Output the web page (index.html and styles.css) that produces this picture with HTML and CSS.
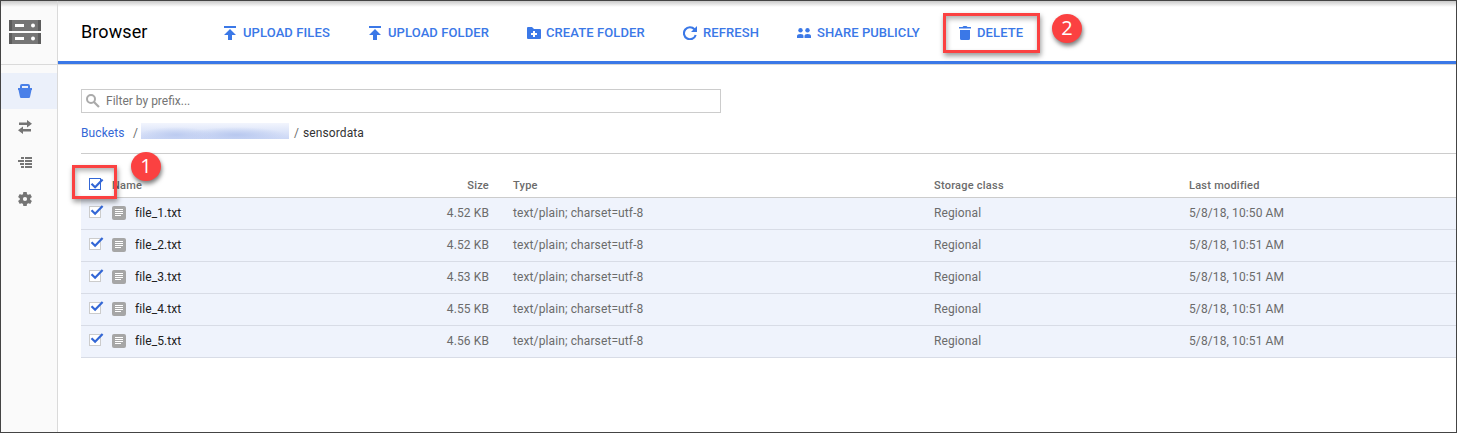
FILE: index.html
```html
<!DOCTYPE html>
<html lang="en">
<head>
<meta charset="utf-8">
<title>Browser</title>
<link rel="stylesheet" href="styles.css">
</head>
<body>
<svg class="defs" width="0" height="0">
  <defs>
    <symbol id="upload" viewBox="0 0 12 14"><path d="M0 0h12v2H0zM6 3l6 6H8v5H4V9H0z"/></symbol>
    <symbol id="check" viewBox="0 0 16 14"><rect class="check-box" x="0.5" y="2.5" width="11" height="11"/><path class="check-mark" d="M2.500 6.200l3.600 3.600L13.600 2"/></symbol>
    <symbol id="doc" viewBox="0 0 14 14"><rect width="14" height="14" rx="2" fill="#a6a6a6"/><path d="M3 3.500h8M3 5.500h8M3 7.500h8M3 9.500h6" stroke="#fff" fill="none"/></symbol>
  </defs>
</svg>
<div class="app">
  <nav class="sidebar">
    <div class="logo">
      <svg width="32" height="25" viewBox="0 0 32 25"><path fill="#757575" d="M0 0h32v11H0zM0 13h32v11H0z"/><path fill="#5c5c5c" d="M0 0h3v11H0zM29 0h3v11h-3zM0 13h3v11H0zM29 13h3v11h-3z"/><path fill="#fff" d="M6 4h9v3H6zM6 17h9v3H6z"/><circle cx="24" cy="5.500" r="2" fill="#fff"/><circle cx="24" cy="18.500" r="2" fill="#fff"/></svg>
    </div>
    <div class="nav-item selected"><svg width="14" height="14" viewBox="0 0 14 14"><path fill="#4a80e8" fill-rule="evenodd" d="M2 4V2q0-2 2-2h6q2 0 2 2v2h2v2h-.5L12 13q-.2 1-1 1H3q-.8 0-1-1L.5 6H0V4zm2 0h6V2H4z"/></svg></div>
    <div class="nav-item"><svg width="14" height="14" viewBox="0 0 14 14"><path d="M1 2.500h8V0l5 3.800-5 3.700V5H1zM13 9H5V6.500L0 10.200 5 14v-2.500h8z"/></svg></div>
    <div class="nav-item"><svg width="14" height="14" viewBox="0 0 14 14"><path d="M3 1h3v2H3zM7 1h7v2H7zM0 4h6v2H0zM7 4h7v2H7zM2 7h4v2H2zM7 7h7v2H7zM3 10h3v2H3zM7 10h7v2H7z"/></svg></div>
    <div class="nav-item"><svg width="14" height="14" viewBox="2.300 2 19.400 20"><path d="M19.430 12.980c.04-.32.070-.64.070-.98s-.03-.66-.07-.98l2.110-1.650c.19-.15.240-.42.120-.64l-2-3.460c-.12-.22-.39-.3-.61-.22l-2.490 1c-.52-.4-1.080-.73-1.690-.98l-.38-2.650C14.460 2.180 14.250 2 14 2h-4c-.25 0-.46.180-.49.420l-.38 2.650c-.61.250-1.170.59-1.690.98l-2.490-1c-.23-.09-.49 0-.61.220l-2 3.460c-.13.220-.07.49.120.640l2.110 1.650c-.04.320-.07.650-.07.980s.03.660.07.980l-2.110 1.650c-.19.150-.24.420-.12.640l2 3.460c.12.220.39.300.61.220l2.490-1c.52.400 1.080.730 1.690.980l.38 2.650c.03.240.24.420.49.420h4c.25 0 .46-.18.490-.42l.38-2.650c.61-.25 1.170-.59 1.690-.98l2.490 1c.23.090.49 0 .61-.22l2-3.460c.12-.22.070-.49-.12-.64zM12 15a3 3 0 1 1 0-6 3 3 0 0 1 0 6z"/></svg></div>
  </nav>
  <main class="main">
    <header class="topbar">
      <h1 class="title">Browser</h1>
      <div class="action upload-files"><svg width="12" height="14"><use href="#upload"/></svg><span>UPLOAD FILES</span></div>
      <div class="action upload-folder"><svg width="12" height="14"><use href="#upload"/></svg><span>UPLOAD FOLDER</span></div>
      <div class="action create"><svg width="14" height="14" viewBox="0 0 14 14"><path fill-rule="evenodd" d="M1 1h4l2 2h6q1 0 1 1v8q0 1-1 1H1q-1 0-1-1V2q0-1 1-1zM6 5v2H4v2h2v2h2V9h2V7H8V5z"/></svg><span>CREATE FOLDER</span></div>
      <div class="action refresh"><svg width="14" height="14" viewBox="0 0 14 14"><path d="M11.500 3.300A6 6 0 1 0 12.700 9" fill="none" stroke="#3b78e7" stroke-width="2.100"/><path d="M14 0v6H8z"/></svg><span>REFRESH</span></div>
      <div class="action share"><svg width="14" height="14" viewBox="0 0 14 14"><circle cx="3.500" cy="4.200" r="2.200"/><circle cx="10.500" cy="4.200" r="2.200"/><path d="M0 12v-2q0-2 3.500-2 3 0 3 2v2zM7.500 12v-2q0-2 3-2Q14 8 14 10v2z"/></svg><span>SHARE PUBLICLY</span></div>
      <div class="action delete"><svg width="12" height="14" viewBox="0 0 12 14"><path d="M0 1h3.500l1-1h3l1 1H12v1.500H0zM1 4h10v8.500q0 1.500-1.500 1.500h-7Q1 14 1 12.500z"/></svg><span>DELETE</span></div>
    </header>
    <section class="content">
      <div class="filter"><svg width="14" height="14" viewBox="0 0 14 14"><circle cx="5" cy="5" r="4" fill="none" stroke="#aaa" stroke-width="2"/><path d="M8 8l5 5" stroke="#aaa" stroke-width="2.200"/></svg><span>Filter by prefix...</span></div>
      <div class="crumbs"><a class="crumb-link">Buckets</a><span class="slash">/</span><span class="redacted"></span><span class="slash-end">/</span><span class="crumb-current">sensordata</span></div>
      <div class="table">
        <div class="row head"><svg class="check head-check" width="16" height="14" viewBox="0 0 16 14"><rect class="check-box" x="0.500" y="1.500" width="11" height="11"/><path class="check-mark" d="M2.500 6.700l3.600 3.600L13.600 2.500"/></svg><span class="name-head">Name</span><span class="size">Size</span><span>Type</span><span>Storage class</span><span>Last modified</span></div>
        <div class="row"><svg class="check" width="16" height="14"><use href="#check"/></svg><svg class="doc" width="14" height="14"><use href="#doc"/></svg><span class="name">file_1.txt</span><span class="size">4.52 KB</span><span>text/plain; charset=utf-8</span><span>Regional</span><span>5/8/18, 10:50 AM</span></div>
        <div class="row"><svg class="check" width="16" height="14"><use href="#check"/></svg><svg class="doc" width="14" height="14"><use href="#doc"/></svg><span class="name">file_2.txt</span><span class="size">4.52 KB</span><span>text/plain; charset=utf-8</span><span>Regional</span><span>5/8/18, 10:51 AM</span></div>
        <div class="row"><svg class="check" width="16" height="14"><use href="#check"/></svg><svg class="doc" width="14" height="14"><use href="#doc"/></svg><span class="name">file_3.txt</span><span class="size">4.53 KB</span><span>text/plain; charset=utf-8</span><span>Regional</span><span>5/8/18, 10:51 AM</span></div>
        <div class="row"><svg class="check" width="16" height="14"><use href="#check"/></svg><svg class="doc" width="14" height="14"><use href="#doc"/></svg><span class="name">file_4.txt</span><span class="size">4.55 KB</span><span>text/plain; charset=utf-8</span><span>Regional</span><span>5/8/18, 10:51 AM</span></div>
        <div class="row"><svg class="check" width="16" height="14"><use href="#check"/></svg><svg class="doc" width="14" height="14"><use href="#doc"/></svg><span class="name">file_5.txt</span><span class="size">4.56 KB</span><span>text/plain; charset=utf-8</span><span>Regional</span><span>5/8/18, 10:51 AM</span></div>
      </div>
    </section>
  </main>
  <div class="callout callout-check"></div>
  <div class="callout callout-delete"></div>
  <div class="step step-one">1</div>
  <div class="step step-two">2</div>
</div>
</body>
</html>
```
FILE: styles.css
```css
* { box-sizing: border-box; }
body { margin: 0; font-family: Roboto, sans-serif; font-size: 12px; color: #6b6b6b; }
svg { display: block; flex: none; }
.defs { position: absolute; }
.app { position: relative; display: flex; width: 1457px; height: 433px; border: 1px solid #444; background: linear-gradient(#c9c9c9, rgba(255, 255, 255, 0) 6px) #fff; overflow: hidden; }

.sidebar { width: 57px; border-right: 1px solid #dadada; background: linear-gradient(#c9c9c9, rgba(250, 250, 250, 0) 6px) #fafafa; }
.logo { height: 64px; margin-bottom: 8px; padding: 19px 0 0 8px; border-bottom: 1px solid #dadada; }
.nav-item { display: flex; align-items: center; height: 36px; padding-left: 17px; fill: #757575; }
.nav-item.selected { background: #ebf0fa; }

.main { flex: 1; min-width: 0; }
.topbar { display: flex; align-items: center; height: 64px; padding-left: 23px; border-bottom: 1px solid #d5d5d5; box-shadow: inset 0 -3px #3b78e7; }
.title { width: 143px; margin: 0; padding-bottom: 2px; font-size: 18px; font-weight: 400; line-height: 24px; letter-spacing: 0.1px; color: #000; }
.action { display: flex; align-items: center; gap: 7px; color: #3b78e7; fill: #3b78e7; font-size: 13px; font-weight: 500; line-height: 16px; letter-spacing: 0.1px; white-space: nowrap; }
.upload-files { width: 145px; }
.upload-folder { width: 158px; }
.create { width: 156px; gap: 5px; }
.refresh { width: 114px; gap: 6px; }
.share { width: 162px; gap: 6px; letter-spacing: 0.05px; }
.delete { gap: 6px; }

.content { padding: 24px 0 0 23px; }
.filter { display: flex; align-items: center; gap: 6px; width: 640px; height: 24px; padding-left: 4px; border: 1px solid #ccc; color: #757575; }
.crumbs { display: flex; align-items: center; height: 16px; margin-top: 12px; line-height: 16px; }
.crumb-link { width: 52px; color: #3367d6; letter-spacing: 0.1px; }
.slash { width: 8px; }
.redacted { width: 148px; height: 16px; margin: -5px 5px 0 0; background: radial-gradient(ellipse 38px 8px at 35px 12px, #bccbf0, transparent), radial-gradient(ellipse 50px 8px at 95px 12px, #b8c8ef, transparent), linear-gradient(#f2f5fd, #cbd7f5); }
.slash-end { width: 9px; }
.crumb-current { color: #333; letter-spacing: 0.1px; }

.table { margin-top: 12px; border-top: 1px solid #ccc; }
.row { display: grid; grid-template-columns: 31px 23px 274px 80px 24px 421px 255px 1fr; align-items: center; height: 32px; padding-bottom: 2px; border-bottom: 1px solid #d8dce6; background: #eff3fc; line-height: 16px; letter-spacing: 0.11px; white-space: nowrap; }
.check { margin: -3px 0 0 8px; }
.check-box { fill: #fff; stroke: #ccc; }
.check-mark { fill: none; stroke: #3367d6; stroke-width: 2.2; }
.name { color: #212121; letter-spacing: 0.08px; }
.size { text-align: right; }
.size + span { grid-column: 6; }
.head { height: 44px; padding: 20px 0 0; border-color: #ccc; background: #fff; font-size: 11px; font-weight: 500; letter-spacing: 0.24px; }
.head-check .check-box { stroke: #3367d6; }
.name-head { grid-column: 2 / 4; }

.callout { position: absolute; border: 3px solid #fb4141; box-shadow: 1px 3px 5px rgba(0, 0, 0, .4), inset 1px 3px 5px rgba(0, 0, 0, .3); }
.callout-check { left: 71px; top: 164px; width: 45px; height: 34px; }
.callout-delete { left: 942px; top: 12px; width: 97px; height: 40px; }
.step { position: absolute; display: flex; align-items: center; justify-content: center; width: 30px; height: 29px; padding-bottom: 1px; border-radius: 50%; background: #fb4141; color: #fff; font-family: "Open Sans", sans-serif; font-size: 20px; font-weight: 500; line-height: 24px; box-shadow: 1px 3px 4px rgba(0, 0, 0, .5); }
.step-one { left: 130px; top: 151px; }
.step-two { left: 1051px; top: 13px; }
```
